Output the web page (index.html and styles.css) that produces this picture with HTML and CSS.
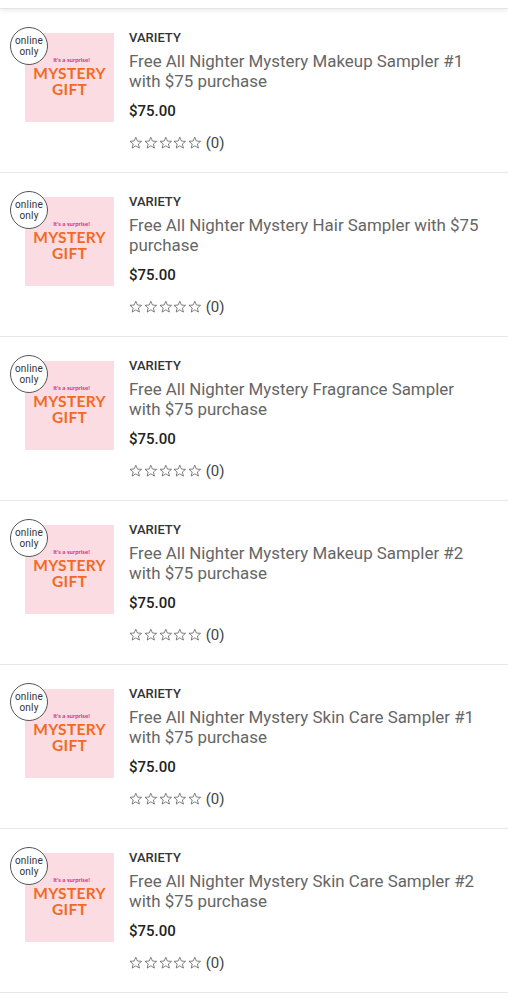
FILE: index.html
```html
<!DOCTYPE html>
<html lang="en">
<head>
    <meta charset="UTF-8">
    <meta name="viewport" content="width=device-width, initial-scale=1.0">
    <title>Mystery Gifts</title>
    <link rel="stylesheet" href="styles.css">
</head>
<body>
    <div class="topbar"></div>
    <ul class="product-list" id="productList"></ul>

    <svg width="0" height="0" style="position:absolute">
        <defs>
            <symbol id="star" viewBox="0 0 24 24">
                <polygon points="12,2.2 14.9,8.9 22.2,9.4 16.6,14.1 18.4,21.3 12,17.4 5.6,21.3 7.4,14.1 1.8,9.4 9.1,8.9"
                    fill="none" stroke="#555" stroke-width="1.3" stroke-linejoin="round"/>
            </symbol>
        </defs>
    </svg>

    <script>
        document.addEventListener('DOMContentLoaded', function() {
            const products = [
                'Free All Nighter Mystery Makeup Sampler #1 with $75 purchase',
                'Free All Nighter Mystery Hair Sampler with $75 purchase',
                'Free All Nighter Mystery Fragrance Sampler with $75 purchase',
                'Free All Nighter Mystery Makeup Sampler #2 with $75 purchase',
                'Free All Nighter Mystery Skin Care Sampler #1 with $75 purchase',
                'Free All Nighter Mystery Skin Care Sampler #2 with $75 purchase'
            ];
            const list = document.getElementById('productList');

            products.forEach(name => {
                const li = document.createElement('li');
                li.className = 'product';
                let stars = '';
                for (let i = 0; i < 5; i++) {
                    stars += '<svg class="star"><use href="#star"/></svg>';
                }
                li.innerHTML = `
                    <div class="thumb">
                        <span class="badge">online<br>only</span>
                        <span class="surprise">It's a surprise!</span>
                        <span class="gift">MYSTERY</span>
                        <span class="gift">GIFT</span>
                    </div>
                    <div class="info">
                        <div class="brand">VARIETY</div>
                        <div class="name">${name}</div>
                        <div class="price">$75.00</div>
                        <div class="rating"><span class="stars">${stars}</span><span class="count">(0)</span></div>
                    </div>`;
                list.appendChild(li);
            });
        });
    </script>
</body>
</html>
```

FILE: styles.css
```css
body {
    margin: 0;
    background-color: #fff;
    font-family: Roboto, "Liberation Sans", Arial, sans-serif;
    color: #333;
}

.topbar {
    height: 8px;
    border-bottom: 1px solid #e4e4e4;
    box-shadow: 0 2px 4px rgba(0, 0, 0, 0.07);
}

.product-list {
    list-style: none;
    margin: 0;
    padding: 0;
}

.product {
    display: flex;
    align-items: flex-start;
    height: 163px;
    box-sizing: content-box;
    border-bottom: 1px solid #e8e8e8;
}

.thumb {
    position: relative;
    flex: none;
    width: 89px;
    height: 89px;
    margin: 24px 15px 0 25px;
    background-color: #fbdce2;
    display: flex;
    flex-direction: column;
    align-items: center;
    justify-content: center;
    font-family: Lato, "Open Sans", sans-serif;
}

.badge {
    position: absolute;
    left: -15px;
    top: -6px;
    width: 36px;
    height: 36px;
    border: 1.5px solid #555;
    border-radius: 50%;
    background-color: #fff;
    display: flex;
    align-items: center;
    justify-content: center;
    text-align: center;
    font-family: Roboto, sans-serif;
    font-size: 10px;
    line-height: 11px;
    color: #333;
    letter-spacing: 0.2px;
}

.surprise {
    font-size: 6px;
    font-weight: bold;
    color: #e2297b;
    margin-top: -2px;
    margin-bottom: 2px;
    margin-left: 4px;
}

.gift {
    font-size: 15.5px;
    font-weight: bold;
    line-height: 16px;
    color: #f26a22;
    text-align: center;
    letter-spacing: 0.3px;
}

.info {
    flex: 1;
    padding-top: 21px;
    padding-right: 20px;
}

.brand {
    font-size: 13px;
    font-weight: 500;
    line-height: 16px;
    color: #333;
}

.name {
    margin-top: 5px;
    font-size: 16.9px;
    line-height: 20px;
    color: #666;
}

.price {
    margin-top: 10px;
    font-size: 15px;
    font-weight: 500;
    line-height: 20px;
    color: #222;
}

.rating {
    margin-top: 12px;
    display: flex;
    align-items: center;
    font-size: 15px;
    line-height: 20px;
    color: #444;
}

.stars {
    display: flex;
    gap: 1.2px;
    margin-right: 4px;
}

.star {
    width: 13.6px;
    height: 13.6px;
}
```
